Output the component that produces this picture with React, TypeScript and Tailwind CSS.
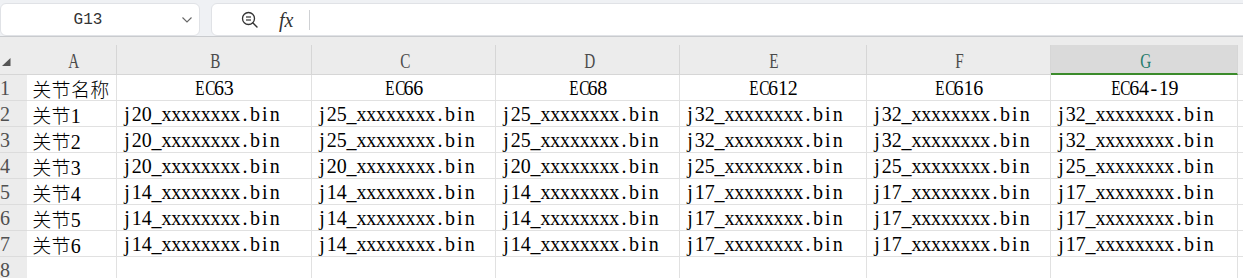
import React from "react";

const isCJK = (c: string) => /[\u3400-\u9fff]/.test(c);
const isUpper = (c: string) => /[A-Z]/.test(c);

function Txt({ t }: { t: string }) {
  const chars = [...t];
  return (
    <>
      {chars.map((c, i) =>
        isCJK(c) ? (
          <span key={i} className="inline-block w-[19.4px] text-center text-[19px] font-['Noto_Sans_CJK_SC',sans-serif] font-light">
            {c}
          </span>
        ) : isUpper(c) ? (
          <span key={i} className="inline-block w-[9.85px] text-center scale-x-[0.76]">
            {c}
          </span>
        ) : (
          <span key={i} className="inline-block w-[9.85px] text-center">
            {c}
          </span>
        )
      )}
    </>
  );
}

const colClasses = [
  "w-[90px]",
  "w-[195px]",
  "w-[184px]",
  "w-[184px]",
  "w-[187px]",
  "w-[184px]",
  "w-[187px]",
];
const letters = ["A", "B", "C", "D", "E", "F", "G"];

const sfx = "_xxxxxxxx.bin";
const rows: string[][] = [
  ["关节名称", "EC63", "EC66", "EC68", "EC612", "EC616", "EC64-19"],
  ["关节1", "j20", "j25", "j25", "j32", "j32", "j32"],
  ["关节2", "j20", "j25", "j25", "j32", "j32", "j32"],
  ["关节3", "j20", "j20", "j20", "j25", "j25", "j25"],
  ["关节4", "j14", "j14", "j14", "j17", "j17", "j17"],
  ["关节5", "j14", "j14", "j14", "j17", "j17", "j17"],
  ["关节6", "j14", "j14", "j14", "j17", "j17", "j17"],
  ["", "", "", "", "", "", ""],
];

export default function App() {
  return (
    <div className="w-[1243px] h-[278px] overflow-hidden bg-white text-[20px] text-black font-['Liberation_Serif','Noto_Sans_CJK_SC',serif]">
      {/* toolbar */}
      <div className="h-[37px] bg-[#eff1f4] border-b border-[#c9cbce] flex items-start pt-[3px]">
        <div className="w-[200px] h-[33px] shrink-0 bg-white rounded-[6px] border border-[#e0e2e6] flex items-center">
          <div className="w-[174px] text-center text-[16px] text-[#333] font-['Liberation_Mono',monospace] leading-none">
            G13
          </div>
          <svg width="12" height="8" viewBox="0 0 12 8" className="ml-[6px]">
            <polyline points="1.5,1.5 6,6 10.5,1.5" fill="none" stroke="#666" strokeWidth="1.1" />
          </svg>
        </div>
        <div className="ml-[11px] w-[1060px] shrink-0 h-[33px] bg-white rounded-[6px] border border-[#e0e2e6] flex items-center">
          <svg width="18" height="18" viewBox="0 0 18 18" className="ml-[29px]">
            <circle cx="7.5" cy="7.5" r="6" fill="none" stroke="#333" strokeWidth="1.3" />
            <line x1="5" y1="6" x2="10" y2="6" stroke="#333" strokeWidth="1.2" />
            <line x1="5" y1="9" x2="10" y2="9" stroke="#333" strokeWidth="1.2" />
            <line x1="12" y1="12" x2="16" y2="16" stroke="#333" strokeWidth="1.4" strokeLinecap="round" />
          </svg>
          <span className="ml-[20px] text-[20px] italic text-[#333] font-['Liberation_Serif',serif] leading-none">
            fx
          </span>
          <div className="ml-[16px] w-px h-[20px] bg-[#cfd1d4]" />
        </div>
      </div>
      {/* strip above headers */}
      <div className="h-[8px] bg-[#ececec]" />
      {/* header row */}
      <div className="flex h-[30px]">
        <div className="w-[27px] shrink-0 bg-[#ececec] border-b border-[#d6d6d6] flex items-end pl-[2px] pb-[8px]">
          <svg width="9" height="8" viewBox="0 0 9 8">
            <polygon points="8.5,0 8.5,8 0,8" fill="#555" />
          </svg>
        </div>
        {letters.map((l, i) => {
          const sel = l === "G";
          return (
            <div
              key={l}
              className={`${colClasses[i]} shrink-0 border-r border-[#d6d6d6] text-center pt-[4px] leading-[24px] ${
                sel
                  ? "bg-[#dadada] border-b-2 border-b-[#3b8b2b] text-[#1f7a6b]"
                  : "bg-[#ececec] border-b border-b-[#d6d6d6] text-[#4a4a4a]"
              }`}
            >
              <Txt t={l} />
            </div>
          );
        })}
        <div className="flex-1 bg-[#ececec] border-b border-[#d6d6d6]" />
      </div>
      {/* data rows */}
      {rows.map((r, ri) => (
        <div key={ri} className="flex h-[26px]">
          <div className="w-[27px] shrink-0 bg-[#ececec] border-b border-[#dcdcdc] text-[#505050] pt-[2px] leading-[23px] whitespace-nowrap overflow-hidden">
            <Txt t={String(ri + 1)} />
          </div>
          {r.map((v, ci) => {
            const text = ri === 0 || ci === 0 || v === "" ? v : v + sfx;
            const center = ri === 0 && ci > 0;
            return (
              <div
                key={ci}
                className={`${colClasses[ci]} shrink-0 border-r border-b border-[#e1e1e1] pt-[2px] leading-[23px] whitespace-nowrap overflow-hidden ${
                  center ? "text-center" : "pl-[5px]"
                }`}
              >
                <Txt t={text} />
              </div>
            );
          })}
          <div className="flex-1 border-b border-[#e1e1e1]" />
        </div>
      ))}
    </div>
  );
}
